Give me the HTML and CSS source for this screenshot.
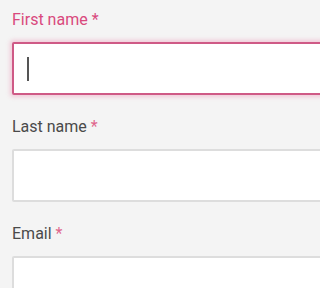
FILE: index.html
```html
<!DOCTYPE html>
<html>
<head>
<meta charset="utf-8">
<link rel="stylesheet" href="styles.css">
</head>
<body>
<form class="form">
  <div class="field">
    <label class="label label-focus">First name <span class="req">*</span></label>
    <div class="input input-focus"><span class="caret"></span></div>
  </div>
  <div class="field">
    <label class="label">Last name <span class="req">*</span></label>
    <div class="input"></div>
  </div>
  <div class="field">
    <label class="label">Email <span class="req">*</span></label>
    <div class="input"></div>
  </div>
</form>
</body>
</html>
```
FILE: styles.css
```css
html, body {
  margin: 0;
  padding: 0;
  background: #f4f4f4;
  overflow: hidden;
}
.form {
  box-sizing: border-box;
  width: 100%;
  height: 288px;
  overflow: hidden;
  display: flex;
  flex-direction: column;
  gap: 20px;
  padding: 8px 0 0 12px;
  font-family: Roboto, "Liberation Sans", sans-serif;
}
.field {
  display: flex;
  flex-direction: column;
  gap: 10px;
  flex-shrink: 0;
}
.label {
  font-size: 16px;
  line-height: 24px;
  color: #4a4a4a;
}
.label-focus {
  color: #d9497d;
}
.req {
  color: #e0668c;
}
.label-focus .req {
  color: #d9497d;
}
.input {
  box-sizing: border-box;
  width: calc(100% + 20px);
  height: 53px;
  flex-shrink: 0;
  background: #ffffff;
  border: 2px solid #dddddd;
  border-radius: 2px;
  display: flex;
  align-items: center;
  padding-left: 13px;
}
.input-focus {
  border-color: #cf5a86;
  box-shadow: 0 0 4px 2px rgba(236, 120, 160, 0.35);
}
.caret {
  width: 1.5px;
  height: 24px;
  background: #555555;
}
```
